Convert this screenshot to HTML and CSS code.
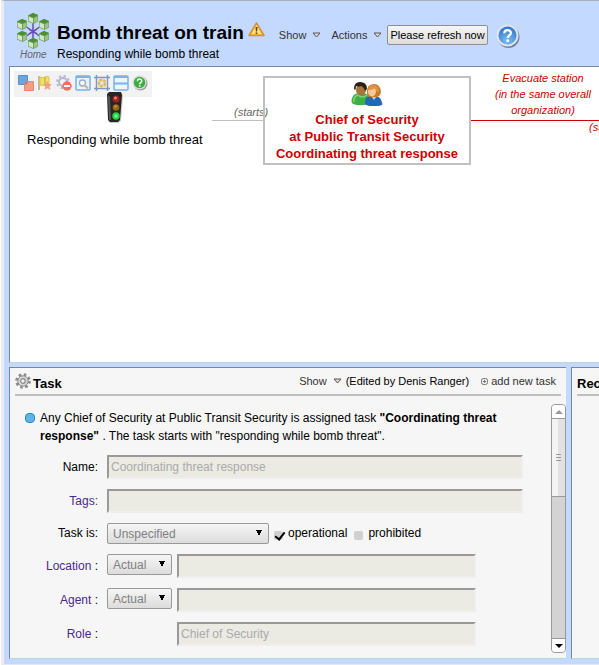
FILE: index.html
```html
<!DOCTYPE html>
<html lang="en">
<head>
<meta charset="utf-8">
<title>Bomb threat on train</title>
<link rel="stylesheet" href="styles.css">
</head>
<body>
<div class="app">
  <header class="top">
    <a class="home" href="#">
      <svg class="logo" viewBox="0 0 34 37" aria-hidden="true">
        <defs>
          <g id="cube">
            <path d="M0 2.500 5 0 10 2 10 8.500 5.500 11 0 8.500z" fill="#6f9f5a"/>
            <path d="M0 2.500 5 0 10 2 5.500 4.500z" fill="#4b8f32"/>
            <path d="M.6 3.500 5 5.300V10L.6 8z" fill="#d3e6c8"/>
            <path d="M6 5.300 9.500 3.400V8L6 10z" fill="#9cc389"/>
          </g>
        </defs>
        <path d="M17 9v20M9 13l16 11M25 13 9 24M13 16l8 5M21 16l-8 5" stroke="#6a4bb5" stroke-width="1.500"/>
        <use href="#cube" x="12" y="0"/>
        <use href="#cube" x="1" y="6"/>
        <use href="#cube" x="23" y="6"/>
        <use href="#cube" x="1" y="18"/>
        <use href="#cube" x="23" y="18"/>
        <use href="#cube" x="12" y="25"/>
      </svg>
      <span>Home</span>
    </a>
    <div class="titles">
      <div class="title-row">
        <h1>Bomb threat on train</h1>
        <svg class="warn" viewBox="0 0 17 15" aria-hidden="true">
          <path d="M8.500 1 16 13.500H1z" fill="#fbc53f" stroke="#d98d3a" stroke-linejoin="round" stroke-width="1.500"/>
          <path d="M8.500 3 13.500 12H3.500z" fill="#ffe27b"/>
          <path d="M7.500 5h2l-.4 4.500H7.900zM7.600 10.500h1.800V12H7.600z" fill="#5b4416"/>
        </svg>
      </div>
      <p>Responding while bomb threat</p>
    </div>
    <nav class="menus">
      <a href="#">Show <svg class="tri" viewBox="0 0 9 6" aria-hidden="true"><path d="M1 1h7L4.500 5z" fill="#ddd" stroke="#555"/></svg></a>
      <a href="#">Actions <svg class="tri" viewBox="0 0 9 6" aria-hidden="true"><path d="M1 1h7L4.500 5z" fill="#ddd" stroke="#555"/></svg></a>
    </nav>
    <button class="refresh" type="button">Please refresh now</button>
    <button class="help" type="button" aria-label="Help">
      <svg viewBox="0 0 24 24" aria-hidden="true">
        <defs><radialGradient id="hb" cx=".5" cy=".8" r=".8"><stop offset="0" stop-color="#7cc0f5"/><stop offset="1" stop-color="#2f74cc"/></radialGradient></defs>
        <circle cx="12.500" cy="13" r="11" fill="#6f7f9b"/>
        <circle cx="11.500" cy="11.500" r="11" fill="#dfe3ea"/>
        <circle cx="11.500" cy="11.500" r="9" fill="url(#hb)"/>
        <path d="M8.300 9.200c0-4.200 6.600-4 6.600-.3 0 2.500-3.200 2.400-3.200 5" fill="none" stroke="#fff" stroke-width="2.200"/>
        <circle cx="11.700" cy="16.700" r="1.400" fill="#fff"/>
      </svg>
    </button>
  </header>

  <main class="flow">
    <div class="tools">
      <button type="button" aria-label="Layers"><svg viewBox="0 0 16 16"><path d="M.5.500h9v9h-9z" fill="#6ba6dc" stroke="#4f91cf"/><path d="M6.500 6.500h9v9h-9z" fill="#f0a088" stroke="#e8866c"/><path d="M6.500 6.500h3v3h-3z" fill="#a87f9b"/></svg></button>
      <button type="button" aria-label="Flag"><svg viewBox="0 0 16 16"><path d="M2 1v14" stroke="#c0b9a0" stroke-width="2"/><path d="M3 2q3 1.500 5 0t4 0v8q-2-1-4 0t-5 0z" fill="#f3df62" stroke="#e0c455"/><path d="M8 2v8" stroke="#a99f70"/><path d="m10.500 6 1.300 3 3.200.2-2.400 2.200.8 3.600-2.900-1.800-3 1.800.8-3.500L6 9.200 9.200 9z" fill="#f19a7d" opacity=".9"/></svg></button>
      <button type="button" aria-label="Remove"><svg viewBox="0 0 16 16"><circle cx="7" cy="7" r="4" fill="none" stroke="#b5b7d0" stroke-width="2"/><circle cx="7" cy="7" r="6" fill="none" stroke="#b5b7d0" stroke-width="2" stroke-dasharray="2.200 2.500"/><circle cx="11" cy="11" r="4.700" fill="#ed715d"/><path d="M8 11h6" stroke="#fff" stroke-width="2"/></svg></button>
      <button type="button" aria-label="Find"><svg viewBox="0 0 16 16"><rect x="1" y="1" width="14" height="14" rx="1" fill="#e8f2fc" stroke="#75b4ed" stroke-width="1.500"/><path d="M1 2h14" stroke="#75b4ed" stroke-width="2"/><circle cx="7.500" cy="8" r="3" fill="#fff" stroke="#98adc4" stroke-width="1.300"/><path d="m10 10.500 3 3" stroke="#dcae7c" stroke-width="2"/></svg></button>
      <button type="button" aria-label="Resize"><svg viewBox="0 0 16 16"><path d="M2.500 0v16M13.500 0v16M0 2.500h16M0 13.500h16" stroke="#7e96c4" stroke-width="1.500"/><path d="M3.500 3.500h9v9h-9z" fill="#e6e2d8"/><circle cx="8" cy="8" r="3.200" fill="none" stroke="#e2b75f" stroke-width="2.500" stroke-dasharray="3 1"/></svg></button>
      <button type="button" aria-label="Split"><svg viewBox="0 0 16 16"><rect x="1" y="1" width="14" height="14" rx="1" fill="#edf4fb" stroke="#75b4ed" stroke-width="1.500"/><path d="M1 2h14M1 8.500h14" stroke="#75b4ed" stroke-width="2"/></svg></button>
      <button type="button" aria-label="Legend"><svg viewBox="0 0 16 16"><circle cx="8.500" cy="8.500" r="7" fill="#999"/><circle cx="7.500" cy="7.500" r="7" fill="#ddd"/><circle cx="7.500" cy="7.500" r="5.700" fill="#3fae42"/><path d="M5.500 6.200c0-2.800 4.300-2.700 4.300-.2 0 1.600-2.100 1.500-2.100 3.200" fill="none" stroke="#fff" stroke-width="1.500"/><path d="M6.900 10.200h1.600v1.500H6.900z" fill="#fff"/></svg></button>
    </div>

    <div class="node event">
      <svg class="light" viewBox="0 0 18 32" aria-hidden="true">
        <path d="M4 3 6 1h10l1 3-2 25-3 2H4L2 28z" fill="#999" opacity=".5"/>
        <path d="M1 2 3 0h12l1 3-2 25-2 2H4L2 28z" fill="#252525"/>
        <path d="M2 3 4 5 5 28H3z" fill="#575757"/>
        <circle cx="10" cy="7" r="3.500" fill="#a51f19"/><circle cx="9.500" cy="6" r="1.500" fill="#df8077"/>
        <circle cx="10" cy="15.500" r="3.300" fill="#9a6415"/><circle cx="9.500" cy="14.500" r="1.300" fill="#c99647"/>
        <circle cx="10" cy="24" r="3.700" fill="#25d33f"/><circle cx="10" cy="24" r="1.700" fill="#76f580"/>
      </svg>
      <span>Responding while bomb threat</span>
    </div>

    <div class="edge in"></div>
    <div class="edge-label starts">(starts)</div>

    <div class="node agent">
      <svg class="people" viewBox="0 0 32 24" aria-hidden="true">
        <path d="M2 22q-3-2 0-8 2-3 8-3t8 3l2 7q-9 4-18 1z" fill="#3fae45"/>
        <path d="M3 20q-1-5 4-7 4 4 9 0" fill="none" stroke="#7ed27a" stroke-width="1.500"/>
        <ellipse cx="10" cy="8" rx="5" ry="5.500" fill="#a9763a"/>
        <path d="M3 7Q3 0 9 0q7 0 7 7l-2 2q-1-4-4-5-3 1-5 0 0 3-1 4z" fill="#2b2016"/>
        <path d="M15 23q-2-2 0-7 2-2 7-2t7 2q3 5 2 7-8 3-16 0z" fill="#2566bd"/>
        <path d="m20 14 3 4 3-4z" fill="#a9d3fb"/>
        <path d="M16 12q-1-10 7-10 6 0 7 8-1 5-5 5h-7z" fill="#c9792a"/>
        <ellipse cx="21" cy="9.500" rx="4" ry="5" fill="#f5c895"/>
        <path d="M17 8q1-5 6-5 5 1 5 7-3 0-4-4-2 2-7 2z" fill="#df9540"/>
      </svg>
      <span>Chief of Security</span>
      <span>at Public Transit Security</span>
      <span>Coordinating threat response</span>
    </div>

    <div class="edge out"></div>
    <div class="edge-label evacuate">Evacuate station<br>(in the same overall<br>organization)</div>
    <div class="edge-label next">(starts)</div>
  </main>

  <div class="lower">
    <section class="panel task">
      <div class="panel-head">
        <svg class="gear" viewBox="0 0 16 16" aria-hidden="true"><circle cx="8" cy="8" r="6.500" fill="none" stroke="#8a8a8a" stroke-width="2.600" stroke-dasharray="2.600 2.500"/><circle cx="8" cy="8" r="5.200" fill="#d6d6d6" stroke="#8a8a8a"/><circle cx="8" cy="8" r="2.300" fill="#eee" stroke="#8a8a8a" stroke-width="1.200"/></svg>
        <h2>Task</h2>
        <a class="show" href="#">Show <svg class="tri" viewBox="0 0 9 6" aria-hidden="true"><path d="M1 1h7L4.500 5z" fill="#ddd" stroke="#555"/></svg></a>
        <span class="edited">(Edited by Denis Ranger)</span>
        <a class="add" href="#"><svg class="plus" viewBox="0 0 7 7" aria-hidden="true"><rect x=".5" y=".5" width="6" height="6" rx="2" fill="#eee" stroke="#777"/><path d="M3.500 2v3M2 3.500h3" stroke="#777"/></svg>add new task</a>
      </div>
      <div class="panel-body">
        <div class="content">
          <p class="summary">Any Chief of Security at Public Transit Security is assigned task <b>"Coordinating threat response"</b> . The task starts with "responding while bomb threat".</p>
          <form class="form">
            <label for="name">Name:</label>
            <div class="field"><input id="name" type="text" value="Coordinating threat response" disabled></div>
            <label for="tags"><a href="#">Tags:</a></label>
            <div class="field"><input id="tags" type="text" disabled></div>
            <label for="kind">Task is:</label>
            <div class="field kind">
              <select id="kind" class="wide" disabled><option>Unspecified</option></select>
              <input id="oper" type="checkbox" checked disabled><label for="oper">operational</label>
              <input id="proh" type="checkbox" disabled><label for="proh">prohibited</label>
            </div>
            <label for="loc"><a href="#">Location</a> :</label>
            <div class="field short"><select aria-label="Location type" disabled><option>Actual</option></select><input id="loc" type="text" disabled></div>
            <label for="agent"><a href="#">Agent</a> :</label>
            <div class="field short"><select aria-label="Agent type" disabled><option>Actual</option></select><input id="agent" type="text" disabled></div>
            <label for="role"><a href="#">Role</a> :</label>
            <div class="field short only"><input id="role" type="text" value="Chief of Security" disabled></div>
          </form>
        </div>
        <div class="scroll" aria-hidden="true">
          <div class="arrow up"><svg viewBox="0 0 8 4"><path d="M0 4 4 0l4 4z" fill="#999"/></svg></div>
          <div class="thumb"><i></i><i></i><i></i></div>
          <div class="track"></div>
          <div class="arrow down"><svg viewBox="0 0 8 4"><path d="M0 0h8L4 4z" fill="#000"/></svg></div>
        </div>
      </div>
    </section>
    <section class="panel side">
      <div class="panel-head"><h2>Received</h2></div>
    </section>
  </div>
</div>
</body>
</html>
```
FILE: styles.css
```css
* { box-sizing: border-box; }
body {
  margin: 0;
  background: #fff;
  color: #000;
  font: 12px "Liberation Sans", Arial, sans-serif;
  overflow: hidden;
}
a { color: #333; text-decoration: none; }
h1, h2, p { margin: 0; }
button { font: inherit; padding: 0; cursor: pointer; }
svg { display: block; }

.app {
  display: flex;
  flex-direction: column;
  min-height: 100vh;
  margin-left: 1px;
  padding: 0 0 5px 5px;
  border-left: 3px solid #ececec;
  border-top: 1px solid #a9b0bd;
  border-bottom: 1px solid #e4e8ee;
  background: #c3d9ff;
}

/* Header */
.top { display: flex; height: 65px; }
.home { width: 48px; padding: 12px 0 0 7px; color: #666; }
.logo { width: 34px; height: 37px; }
.home span { display: block; margin-left: 4px; font: italic 10px/10px "Liberation Sans", Arial, sans-serif; }
.title-row { display: flex; }
.top h1 { font-size: 19px; line-height: 24px; white-space: nowrap; }
.titles { padding-top: 20px; }
.titles p { font-size: 12px; line-height: 18px; }
.warn { width: 17px; height: 15px; margin: 1px 0 0 4px; }
.menus {
  display: flex;
  align-items: flex-start;
  gap: 10px;
  padding: 27px 5px 0 14px;
  font-size: 11px;
  line-height: 14px;
}
.menus a, .show { display: flex; align-items: center; gap: 6px; }
.tri { width: 9px; height: 6px; }
.refresh {
  height: 20px;
  margin-top: 24px;
  padding: 0 2px;
  border: 1px solid #8e8f8f;
  border-radius: 2px;
  background: linear-gradient(#f6f6f6, #dcdcdc);
  font-size: 11px;
  white-space: nowrap;
}
.help { width: 24px; height: 24px; margin: 23px 0 0 8px; border: 0; background: none; }

/* Flow diagram */
.flow {
  position: relative;
  flex: 1;
  min-height: 200px;
  overflow: hidden;
  border: 1px solid;
  border-color: #778899 #c3d9ff #b9d9d9 #778899;
  border-right: 0;
  background: #fff;
}
.tools {
  display: flex;
  gap: 3px;
  width: 138px;
  height: 26px;
  margin: 4px;
  padding: 4px;
  background: #f2f2f2;
}
.tools button { width: 16px; height: 16px; border: 0; background: none; }
.node, .edge, .edge-label { position: absolute; white-space: nowrap; }
.node span { display: block; }
.event { left: 17px; top: 25px; font-size: 13px; line-height: 16px; }
.light { width: 18px; height: 32px; margin: 0 auto 8px; }
.agent {
  left: 253px;
  top: 9px;
  width: 208px;
  height: 89px;
  padding-top: 4px;
  border: 2px solid #c0c0c0;
  color: #c00;
  font-size: 13px;
  font-weight: bold;
  line-height: 17px;
  text-align: center;
}
.people { width: 32px; height: 24px; margin: 0 auto 5px; }
.edge { height: 1px; }
.in { left: 202px; top: 53px; width: 51px; background: #c0c0c0; }
.out { left: 461px; top: 53px; right: 0; background: #c00; }
.edge-label { color: #c00; font-size: 11px; font-style: italic; line-height: 16px; text-align: center; }
.starts { left: 224px; top: 37px; color: #666; }
.evacuate { left: 485px; top: 3px; }
.next { left: 579px; top: 52px; }

/* Lower panels */
.lower { display: flex; gap: 5px; margin-top: 4px; }
.panel {
  min-width: 0;
  border: 1px solid;
  border-color: #778899 #b9d9d9 #b9d9d9 #778899;
  background: #f6f6f6;
}
.task { flex: 1; border-right: 0; }
.side { flex: 0 0 28px; overflow: hidden; border-right: 0; }
.panel-head {
  display: flex;
  align-items: center;
  height: 28px;
  margin: 0 5px;
  border-bottom: 2px solid #c0c0c0;
  font-size: 11px;
  white-space: nowrap;
}
.panel-head h2 { padding-top: 5px; font-size: 13px; }
.side .panel-head { margin-right: 0; }
.gear { width: 16px; height: 16px; margin-right: 2px; }
.show { margin-left: auto; }
.edited { margin: 0 12px 0 4px; }
.add { display: flex; align-items: center; gap: 3px; margin-right: 5px; }
.plus { width: 7px; height: 7px; }
.panel-body { display: flex; padding: 8px 0 5px; }
.content { flex: 1; min-width: 0; padding-bottom: 7px; font-size: 12px; }
.summary { position: relative; padding: 5px 30px 0 30px; line-height: 18px; }
.summary::before {
  content: "";
  position: absolute;
  left: 15px;
  top: 9px;
  width: 8px;
  height: 8px;
  border: 1px solid #2a86c0;
  border-radius: 4px;
  background: #5cb6ec;
}
.form {
  display: grid;
  grid-template-columns: 88px minmax(0, 1fr);
  align-items: center;
  column-gap: 9px;
  row-gap: 10px;
  padding: 10px 28px 0 0;
}
.form > label { line-height: 21px; text-align: right; }
.form a { color: #4b2a87; }
.field { display: flex; height: 24px; }
.field input[type="text"] {
  flex: 1;
  min-width: 0;
  height: 24px;
  padding: 0 2px;
  border: 2px solid;
  border-color: #999 #eee #eee #999;
  background: #ebebe4;
  color: #aaa;
  font: 12px "Liberation Sans", Arial, sans-serif;
}
.short { padding-right: 47px; }
.only { padding-left: 70px; }
.field select {
  appearance: none;
  width: 65px;
  height: 21px;
  margin-right: 5px;
  padding: 0 5px;
  border: 1px solid #999;
  border-radius: 2px;
  color: #808080;
  opacity: 1;
  font: 12px "Liberation Sans", Arial, sans-serif;
  background-image: conic-gradient(from -27deg at 50% 100%, #000 54deg, transparent 0), linear-gradient(#f6f6f6, #dcdcdc);
  background-position: right 6px top 6px, 0 0;
  background-size: 6px 6px, 100% 100%;
  background-repeat: no-repeat;
}
.field select.wide { width: 162px; }
.kind { height: 21px; }
.kind label { margin-right: 7px; line-height: 21px; }
.kind input {
  appearance: none;
  width: 9px;
  height: 9px;
  margin: 8px 5px 0 0;
  border-radius: 2px;
  background: #d0d0d0;
}
.kind input:checked::after {
  content: "";
  display: block;
  width: 4px;
  height: 8px;
  margin: -1px 0 0 3px;
  border: solid #000;
  border-width: 0 2px 2px 0;
  transform: rotate(38deg);
}
.scroll { display: flex; flex-direction: column; width: 15px; border: 1px solid #999; border-radius: 4px; background: #d3d3d3; }
.arrow { display: flex; align-items: center; justify-content: center; height: 14px; background: #fff; }
.arrow svg { width: 8px; height: 4px; }
.up { border-bottom: 1px solid #999; border-radius: 3px 3px 0 0; }
.down { border-top: 1px solid #999; border-radius: 0 0 3px 3px; }
.thumb {
  display: flex;
  flex-direction: column;
  align-items: center;
  justify-content: center;
  gap: 2px;
  height: 78px;
  border-bottom: 1px solid #999;
  background: linear-gradient(90deg, #f4f4f4 50%, #e2e2e2 50%);
}
.thumb i { width: 5px; height: 1px; background: #999; }
.track { flex: 1; }
```
